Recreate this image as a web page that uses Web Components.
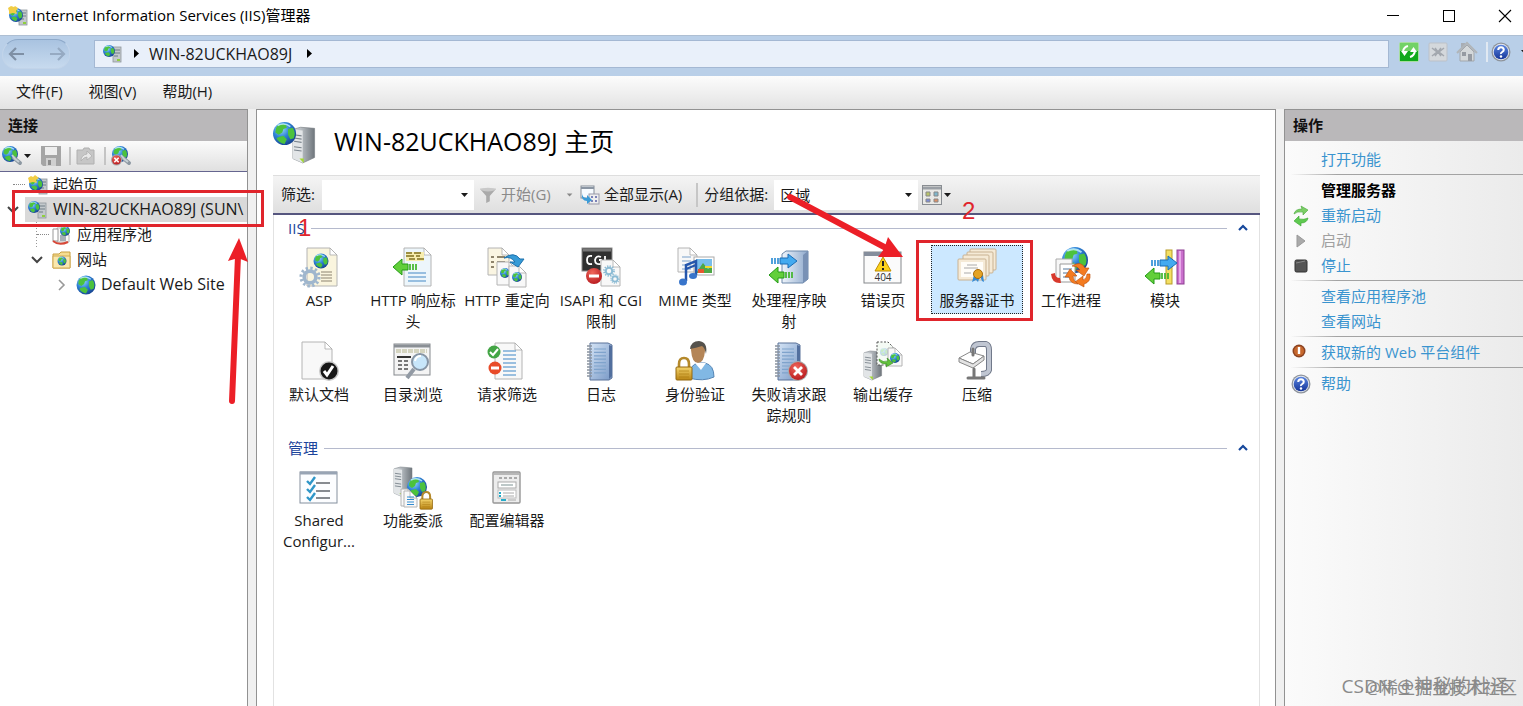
<!DOCTYPE html>
<html lang="zh-CN">
<head>
<meta charset="utf-8">
<title>Internet Information Services (IIS)管理器</title>
<style>
html, body { margin: 0; height: 100%; }
body { font: 15px/21px "Open Sans", "Noto Sans CJK SC", sans-serif; color: #1a1a1a; overflow: hidden; }
</style>
</head>
<body>
<iis-manager></iis-manager>
<script>
/* ---------- shared drawing parts ---------- */
const DEFS = `<defs>
<radialGradient id="gl" cx=".35" cy=".3" r=".8"><stop offset="0" stop-color="#9bdcff"/><stop offset=".45" stop-color="#2f83d6"/><stop offset="1" stop-color="#123a86"/></radialGradient>
<linearGradient id="sv" x1="0" x2="1"><stop offset="0" stop-color="#dfe3e6"/><stop offset=".5" stop-color="#aab0b5"/><stop offset="1" stop-color="#6f767c"/></linearGradient>
<linearGradient id="bk" x1="0" x2="1" y2="1"><stop offset="0" stop-color="#d3e3f5"/><stop offset="1" stop-color="#7898c6"/></linearGradient>
<linearGradient id="cube" x1="0" x2="1"><stop offset="0" stop-color="#eef4fb"/><stop offset="1" stop-color="#8ea9cc"/></linearGradient>
<linearGradient id="gold" x1="0" x2="0" y2="1"><stop offset="0" stop-color="#f4d46c"/><stop offset="1" stop-color="#b98413"/></linearGradient>
<radialGradient id="red" cx=".4" cy=".3" r=".8"><stop offset="0" stop-color="#f0665a"/><stop offset="1" stop-color="#b3141a"/></radialGradient>
<linearGradient id="hp" x1="0" x2="0" y2="1"><stop offset="0" stop-color="#5b86e0"/><stop offset="1" stop-color="#16369a"/></linearGradient>
</defs>`;
const globe = (x, y, r) => `<g transform="translate(${x} ${y}) scale(${r / 10})"><circle r="10" fill="url(#gl)"/><path d="M-6-7Q-2-9 1-8L2-5-1-4-2-1-5 1-8-1Q-8-5-6-7ZM-5 3-1 2 2 5 0 9Q-5 8-7 4ZM3-4 7-5Q10-1 8 4L5 5 3 1Z" fill="#4cc23d"/><path d="M-6-7Q0-10 5-6" fill="none" stroke="#c8f2ff" stroke-width="1.4" opacity=".8"/></g>`;
const page = (x, y, w, h, c = '#f8f8f8') => `<path d="M${x} ${y}h${w - 7}l7 7v${h - 7}h${-w}z" fill="${c}" stroke="#b4b4b4"/><path d="M${x + w - 7} ${y}v7h7z" fill="#fff" stroke="#aaa" stroke-width=".8"/>`;
const server = (x, y, s) => `<g transform="translate(${x} ${y}) scale(${s})"><path d="M0 2 7 0 20 1V28L9 33 0 29Z" fill="url(#sv)" stroke="#787e84" stroke-width=".6"/><path d="M0 2 9 3V33L0 29Z" fill="#e2e5e7"/><path d="M1 7l7 1M1 10l7 1M1 13l7 1M1 18l7 1M1 21l7 1" stroke="#7b848c"/><path d="M6 29h4v4z" fill="#a3da31"/></g>`;
const tower = (x, y) => `<rect x="${x}" y="${y}" width="8" height="15" fill="#c3c9cc" stroke="#8f979c" stroke-width=".8"/><path d="M${x + 1} ${y + 3}h6M${x + 1} ${y + 6}h6M${x + 1} ${y + 9}h4" stroke="#6f7c85"/><path d="M${x + 4} ${y + 12}h3v2h-3z" fill="#8fd03c"/>`;
const lines = (x, y, w, n, g, c = '#888') => `<path d="${Array.from({length: n}, (_, i) => `M${x} ${y + i * g}h${w}`).join('')}" stroke="${c}" stroke-width="1.2" fill="none"/>`;
const book = `<path d="M9 2h18l4 2v33l-3 2H9z" fill="url(#bk)" stroke="#5a7299"/><path d="M28 4v34l3-3V5z" fill="#526f9e"/>${lines(13, 8, 12, 8, 3.4, '#7fa3cc')}<path d="M6 5h5M6 8h5M6 11h5M6 14h5M6 17h5M6 20h5M6 23h5M6 26h5M6 29h5M6 32h5M6 35h5" stroke="#8a94a0" stroke-width="1.3"/>`;
const greenLeft = (x, y, s = 1) => `<g transform="translate(${x} ${y}) scale(${s})"><path d="M0 8 9 0V5H15V11H9V16Z" fill="#62cf3a" stroke="#249a17"/><path d="M17 5v6M20 5v6M23 5v6" stroke="#3fb52a" stroke-width="1.7"/></g>`;
const blueRight = (x, y) => `<path d="M${x + 9} ${y + 4}h8V${y}l9 7-9 7v-4h-8z" fill="#43aaf0" stroke="#1a6db5"/><path d="M${x + 1} ${y + 4}v6M${x + 4} ${y + 4}v6M${x + 7} ${y + 4}v6" stroke="#2589d4" stroke-width="1.6"/>`;
const lock = (x, y, s = 1) => `<g transform="translate(${x} ${y}) scale(${s})"><path d="M3 10V6Q3 0 8 0T13 6V10" fill="none" stroke="#b5892a" stroke-width="2.6"/><rect y="9" width="16" height="13" rx="1" fill="url(#gold)" stroke="#94680f"/><path d="M3 13h10M3 16h10M3 19h10" stroke="#a8780f" opacity=".6"/></g>`;
const gear = (x, y, r, c) => `<g transform="translate(${x} ${y})" fill="none" stroke="${c}"><circle r="${r}" stroke-width="${r * .35}" stroke-dasharray="${r * .262}"/><circle r="${r * .65}" stroke-width="${r * .4}"/></g>`;
const help = `<circle cx="10" cy="10" r="9.5" fill="#8e949c"/><circle cx="10" cy="10" r="8.2" fill="#e5e9f0"/><circle cx="10" cy="10" r="7.3" fill="url(#hp)"/><path d="M7.2 8Q7.4 5.2 10 5.2T12.8 7.8Q12.8 9 11.2 10T10 12" fill="none" stroke="#fff" stroke-width="2"/><circle cx="10" cy="14.5" r="1.2" fill="#fff"/>`;
const redX = (x, y, r) => `<circle cx="${x}" cy="${y}" r="${r}" fill="#a9a9a9"/><circle cx="${x}" cy="${y}" r="${r - 1}" fill="url(#red)"/><path d="M${x - r * .4} ${y - r * .4}l${r * .8} ${r * .8}m0 ${-r * .8}l${-r * .8} ${r * .8}" stroke="#fff" stroke-width="${r * .28}"/>`;
const magnifier = `<path d="M12 12l6 5" stroke="#8d98a2" stroke-width="4" stroke-linecap="round"/><path d="M10 9l4 5M12 12l5 4" stroke="#c6d0d6" stroke-width="2"/>`;

/* name: [viewBox size, markup] */
const ICONS = {
  app: [20, tower(11, 4) + globe(8, 9, 7) + '<path d="M0 2l3-2 3 1 1-1 3 2-2 3 1 3-4-1-4 1V5z" fill="#f1cd45"/>'],
  node: [20, tower(10, 3) + globe(6, 7, 6)],
  start: [20, tower(11, 4) + globe(8, 9, 7) + '<path d="M0 3l3-2 2 1 2-2 4 3-3 2 1 3-4-1-4 1V6z" fill="#f1cd45"/>'],
  connect: [20, globe(8, 8, 8) + magnifier],
  save: [20, '<path d="M0 0h20v20H2l-2-2z" fill="#a5a5a5"/><rect x="4" y="1" width="12" height="8" fill="#eee"/><rect x="5" y="12" width="10" height="8" fill="#d0d0d0"/><rect x="7" y="14" width="3" height="5" fill="#8c8c8c"/>'],
  up: [20, '<path d="M1 4h6l1-2h5l1 2h4v14H1z" fill="#c6c6c6" stroke="#b0b0b0"/><path d="M5 15q0-6 6-7V5l5 5-5 4v-3q-3 0-6 4z" fill="#e8e8e8" stroke="#aaa" stroke-width=".7"/>'],
  disconnect: [20, globe(9, 8, 8) + magnifier + redX(5.5, 14, 5.5)],
  pool: [20, page(5, 3, 12, 14) + globe(13, 6, 5) + '<path d="M1 4h5v12H1z" fill="#fff" stroke="#999"/>' + lines(8, 11, 6, 3, 2, '#567') + '<path d="M1 16q6 5 15 1" fill="none" stroke="#d74838" stroke-width="2"/>'],
  folder: [20, '<path d="M1 4h6l2-2h9v16H1z" fill="#f5dd92" stroke="#c99f3e"/><path d="M1 6h17v12H1z" fill="#f9e7ad" stroke="#d0aa52"/>' + globe(10, 11, 4.5)],
  globe: [20, globe(10, 10, 9.5)],
  home: [40, server(19, 5, 1.03) + globe(11, 11, 11)],
  refresh: [20, '<rect width="20" height="20" rx="2" fill="#a7dda0"/><rect x="1" y="1" width="18" height="8" fill="#72d267"/><rect x="1" y="9" width="18" height="10" fill="#11a91c"/><path d="M4 9q1-4 5-5M16 9q-1 5-5 6" fill="none" stroke="#fff" stroke-width="2"/><path d="M2 9h7l-3.5 5zM11 10h7l-3.5-5z" fill="#fff"/>'],
  stopload: [20, '<rect x="1" y="1" width="18" height="18" rx="1" fill="#d4d8dc" stroke="#bcc1c8"/><path d="M4 6l5 4-5 4M16 6l-5 4 5 4M7 6l6 8m0-8l-6 8" fill="none" stroke="#a2a7ae" stroke-width="1.5"/>'],
  house: [20, '<path d="M4 1h4v6H4z" fill="#a8adb4"/><path d="M3 10v9h14v-9l-7-7z" fill="#d4d8da" stroke="#a2a7ab"/><path d="M0 11L10 1l10 10" fill="none" stroke="#b0b5b9" stroke-width="2"/><path d="M11 12h4v7h-4zM5 10h4v4H5z" fill="#969ba2"/>'],
  help: [20, help],
  funnel: [20, '<path d="M1 3h18l-7 8v6l-4 2v-8z" fill="#aaa"/><ellipse cx="10" cy="4" rx="8" ry="2" fill="#c9c9c9"/>'],
  showall: [20, '<rect x="1" y="1" width="13" height="12" fill="#f7fbff" stroke="#858d98"/><path d="M1 3h13" stroke="#8a95a3" stroke-width="2"/><rect x="9" y="9" width="10" height="10" fill="#eee" stroke="#99a"/><path d="M11 11h2v2h-2zM15 11h2v2h-2zM11 15h2v2h-2zM15 15h2v2h-2z" fill="#7c82b8"/><path d="M2 8q0 5 5 5v-3l5 5-5 4v-3q-6 0-5-8z" fill="#3b9bd7"/>'],
  view: [20, '<rect x=".5" y=".5" width="19" height="19" fill="#e9e9e6" stroke="#898d92"/><path d="M1 3h18" stroke="#9a9fa5" stroke-width="3"/><g stroke="#888"><path d="M4 7h4v4H4z" fill="#b8c46a"/><path d="M12 7h4v4h-4z" fill="#7fb7cc"/><path d="M4 14h4v3H4z" fill="#7c8cd8"/><path d="M12 14h4v3h-4z" fill="#dc8f66"/></g>'],
  asp: [40, page(8, 1, 30, 38, '#faf5de') + globe(22, 14, 7.5) + lines(22, 25, 11, 4, 3, '#8b8470') + gear(11, 30, 9, '#9fb6cd')],
  headers: [40, page(11, 1, 27, 38, '#edf6fb') + '<path d="M13 5h18v9H13z" fill="#f7edae"/><path d="M13 6h6m2 0h7M13 9h8m2 0h4M16 12h6m2 0h7" stroke="#80701f" stroke-width="1.4"/>' + lines(15, 26, 18, 3, 4, '#4587c5') + greenLeft(0, 12)],
  redirect: [40, page(1, 1, 21, 27, '#faf5e2') + '<path d="M4 10h3m3 0h8M4 15h3m3 0h8M4 20h3m3 0h5" stroke="#8e846c" stroke-width="2"/>' + page(10, 15, 19, 23) + globe(18, 26, 5) + page(22, 19, 17, 21) + globe(30, 30, 5) + '<path d="M17 11q10-7 16 1h4l-6 8-8-5h5q-4-6-11-4z" fill="#369bd7" stroke="#1d70ac"/>'],
  cgi: [40, '<rect x="1" y="1" width="30" height="23" fill="#303030" stroke="#8a8a8a"/><path d="M2 3h28" stroke="#777" stroke-width="3"/><path d="M11 9q-5-1-5 4t5 4M20 10q-5-2-6 3 0 5 6 4v-4h-2M24 9v8" fill="none" stroke="#fff" stroke-width="1.8"/>' + page(20, 13, 19, 26) + gear(28, 24, 5, '#8cbbd4') + gear(34, 32, 4, '#8cbbd4') + '<circle cx="13" cy="29" r="8" fill="url(#red)"/><path d="M8 29h10" stroke="#fff" stroke-width="3"/>'],
  mime: [40, page(3, 1, 19, 24) + lines(7, 10, 9, 4, 4, '#789fc9') + '<rect x="19" y="10" width="20" height="18" fill="#fff" stroke="#aaa"/><path d="M21 12h16v14H21z" fill="#79bdea"/><path d="M21 26l7-10 5 6 4-3v7z" fill="#4ea746"/><path d="M23 22h6v4h-6z" fill="#e6572e"/><path d="M30 19h7v2h-7z" fill="#f2d92e"/><path d="M11 34V18L21 14V28" fill="none" stroke="#2456ac" stroke-width="2.5"/><path d="M11 22l10-4" stroke="#2456ac" stroke-width="2"/><ellipse cx="8" cy="35" rx="4" ry="3.5" fill="#3875cb"/><ellipse cx="18" cy="29" rx="4" ry="3" fill="#3875cb"/>'],
  handler: [40, '<path d="M13 7l4-3h22v28l-5 4H13z" fill="url(#cube)" stroke="#6d88aa"/><path d="M34 8v28l5-4V4z" fill="#7891b5"/>' + blueRight(2, 7) + greenLeft(0, 20)],
  error: [40, '<rect x="1" y="5" width="37" height="31" fill="#fbfbfb" stroke="#85888c"/><path d="M1 7h37" stroke="#858e9c" stroke-width="4"/><path d="M20 10l8 14H12z" fill="#fbd21c" stroke="#c08c00" stroke-linejoin="round"/><path d="M20 14v5M20 21v2" stroke="#222" stroke-width="2"/><text x="20" y="34" font-size="10" text-anchor="middle" fill="#333" font-family="Open Sans">404</text>'],
  cert: [40, '<g fill="#f5ead6" stroke="#c9b292"><rect x="13" y="2" width="26" height="21" rx="1"/><rect x="10" y="5" width="26" height="21" rx="1"/><rect x="6" y="8" width="26" height="21" rx="1"/><rect x="1" y="12" width="28" height="21" rx="1"/></g><rect x="4" y="15" width="22" height="15" fill="#fffdf8"/><path d="M10 18h10M7 21h14M7 26h7" stroke="#aaa"/><path d="M17 28l-2 7 4-2 2 2 2-6 2 5 2 1-1-7z" fill="#368bd6"/><circle cx="21" cy="27" r="4.500" fill="#e5a425" stroke="#a86c0d"/>'],
  worker: [40, globe(24, 13, 13) + '<path d="M5 12h16v20H5z" fill="#f7f7f7" stroke="#aaa"/><path d="M9 17h15v18H9z" fill="#fff" stroke="#999"/>' + lines(12, 22, 9, 3, 4, '#579') + '<path d="M0 27q1 10 10 9l-1-5q-5 0-5-5z" fill="#d8392c"/><g fill="#f47b20" stroke="#b94e0c" stroke-width=".6"><path d="M21 19q9-6 13 2h4l-5 8-8-6h4q-2-4-8-4z"/><path d="M39 27q1 8-6 10v3l-9-5 8-6v4q4-1 4-6z"/><path d="M14 30l5-8 7 7h-4q0 5 5 8-8 0-9-7z"/></g>'],
  module: [40, '<rect x="21" y="3" width="6" height="34" fill="#f4df63" stroke="#b79c29"/><rect x="32" y="3" width="7" height="34" fill="#ca70cd" stroke="#8d3e91"/><path d="M35 4v32" stroke="#e7aae9" stroke-width="2"/>' + blueRight(6, 9) + greenLeft(0, 21)],
  document: [40, page(3, 1, 30, 37) + '<circle cx="30" cy="30" r="10" fill="#c8c8c8"/><circle cx="30" cy="30" r="8.5" fill="#161616"/><path d="M25 30l3 4 6-9" fill="none" stroke="#fff" stroke-width="3"/>'],
  browse: [40, '<rect x="1" y="3" width="36" height="31" fill="#f4f4f4" stroke="#85898e"/><path d="M1 5h36" stroke="#8a8f95" stroke-width="3"/><path d="M3 10h31" stroke="#d4d4c0" stroke-width="4" stroke-dasharray="5 1"/><path d="M4 16h14" stroke="#333" stroke-width="2"/><path d="M5 20h12M5 24h10M5 28h10" stroke="#777" stroke-width="2" stroke-dasharray="4 2"/><path d="M21 28L14 37" stroke="#929aa4" stroke-width="4"/><circle cx="27" cy="21" r="8" fill="#c8e6fa" stroke="#8795a5" stroke-width="2"/><path d="M22 20q1-5 6-5" fill="none" stroke="#fff" stroke-width="2"/>'],
  filter: [40, page(8, 2, 27, 36) + lines(16, 10, 13, 7, 4, '#3d86c6') + '<circle cx="7" cy="11" r="6.500" fill="#43a545"/><path d="M3 11l3 3 5-6" fill="none" stroke="#fff" stroke-width="2"/><circle cx="8" cy="27" r="6.500" fill="#e84b29"/><path d="M4 27h8" stroke="#fff" stroke-width="3"/>'],
  log: [40, book],
  auth: [40, '<path d="M14 37q0-14 10-15h6q9 2 9 14-11 5-25 1z" fill="#81b8e4" stroke="#5685b4"/><path d="M20 22l6 7 5-7z" fill="#fff"/><path d="M16 9q0-8 7-8 8 0 7 9-1 12-7 12t-7-13z" fill="#b48557"/><path d="M15 8q1-8 9-8 9 1 7 13-1-6-4-8-6 2-12 3z" fill="#55524c"/>' + lock(1, 17)],
  failed: [40, book + redX(29, 30, 10)],
  cache: [40, server(1, 10, .88) + '<path d="M14 1h11l5 5v18H14z" fill="#f4faf4" stroke="#555" stroke-dasharray="2 1.5"/>' + globe(21, 11, 4).replace('<g ', '<g opacity=".25" ') + page(25, 7, 14, 18) + globe(32, 17, 5) + '<path d="M16 18q4 4 9 2l-1-3 6 5-7 4 1-3q-8 0-8-5z" fill="#62c13b" stroke="#31861a" stroke-width=".6"/>'],
  compress: [40, '<g fill="none" stroke-linejoin="round"><path d="M16 13V8q1-5 6-5h7q3 1 3 6v20q-1 4-8 4" stroke="#71798a" stroke-width="6"/><path d="M16 13V8q1-5 6-5h7q3 1 3 6v20q-1 4-8 4" stroke="#c0c6d2" stroke-width="4"/></g><path d="M2 17l11-6 14 4-11 8z" fill="#fff" stroke="#888"/><path d="M2 17v4l14 6 11-8v-4l-11 8z" fill="#e3e3e3" stroke="#888"/><path d="M16 8v6M17 28v8M11 37h16" stroke="#777" stroke-width="3" stroke-linecap="round"/>'],
  shared: [40, '<rect x="1" y="5" width="37" height="31" fill="#fcfdff" stroke="#85909e"/><path d="M1 6h37" stroke="#98a4b4" stroke-width="3"/><path d="M8 14l3 3 5-7M8 22l3 3 5-7M8 30l3 3 5-7" fill="none" stroke="#2f96c8" stroke-width="2.4"/><path d="M17 16h14M17 24h14M17 31h14" stroke="#60666e" stroke-width="1.4"/>'],
  delegate: [40, server(1, 0, .9) + globe(24, 20, 10) + page(8, 22, 14, 17) + page(11, 24, 13, 16) + lines(14, 30, 7, 4, 2.5, '#318bd1') + lock(27, 25, .78)],
  config: [40, '<rect x="6" y="5" width="27" height="31" rx="1" fill="#ededed" stroke="#969696" stroke-width="1.4"/><path d="M7 7h25" stroke="#b8b8b8" stroke-width="2"/><path d="M12 11h3m2 0h3m2 0h3m2 0h3" stroke="#aaa" stroke-width="2"/><rect x="11" y="15" width="18" height="6" fill="#fff" stroke="#aaa"/><path d="M14 18h12" stroke="#9aa" stroke-width="1.3"/><rect x="11" y="23" width="18" height="8" fill="#fff" stroke="#bbb"/><path d="M12 26h2m-2 3h2M14 33h5" stroke="#25abc9" stroke-width="2"/><path d="M16 26h11M16 29h11M21 33h8" stroke="#aaa"/>'],
  restart: [20, '<path d="M3 8q1-5 8-5l-1-3 7 4-5 5V6Q6 5 3 8z" fill="#7cce66" stroke="#46a83a" stroke-width=".6"/><path d="M17 12q-1 5-7 5v3l-7-5 5-5v3q5 1 9-1z" fill="#5fca50" stroke="#35a22c" stroke-width=".6"/>'],
  play: [20, '<path d="M6 4v12l8-6z" fill="#aaa" stroke="#999"/>'],
  stop: [20, '<rect x="4" y="4" width="12" height="12" rx="1.5" fill="#555" stroke="#333"/><path d="M5 7q5-1 9-2" stroke="#888"/>'],
  webpi: [20, '<circle cx="8" cy="8" r="6.5" fill="#8b4322"/><circle cx="8" cy="8" r="5" fill="#c7682d"/><path d="M8 4v7" stroke="#fff" stroke-width="2.4"/>'],
  back: [20, '<path d="M9 4L3 10l6 6M3 10h14" fill="none" stroke="#7f90a5" stroke-width="2.2"/>'],
  forward: [20, '<path d="M11 4l6 6-6 6M17 10H3" fill="none" stroke="#96aac2" stroke-width="2.2"/>'],
  min: [20, '<path d="M4 9.5h12" stroke="#000"/>'],
  max: [20, '<rect x="4.5" y="4.5" width="11" height="11" fill="none" stroke="#000"/>'],
  close: [20, '<path d="M4 4l12 12M16 4L4 16" stroke="#000" stroke-width="1.1"/>'],
  caret: [10, '<path d="M1 3h7L4.500 7z" fill="currentColor"/>'],
  right: [10, '<path d="M3 0v9l5-4.500z" fill="#000"/>'],
  down: [12, '<path d="M1 3l5 5 5-5" fill="none" stroke="#444" stroke-width="2"/>'],
  closed: [12, '<path d="M4 1l5 5-5 5" fill="none" stroke="#999" stroke-width="1.6"/>'],
  collapse: [12, '<path d="M2 8l4-4 4 4" fill="none" stroke="#17489c" stroke-width="2.2"/>']
};

function define(name, html, init) {
  const template = document.createElement('template');
  template.innerHTML = html;
  customElements.define(name, class extends HTMLElement {
    constructor() {
      super();
      this.attachShadow({ mode: 'open' }).append(template.content.cloneNode(true));
    }
    connectedCallback() { if (init && !this.ready) { this.ready = true; init.call(this, this.shadowRoot); } }
  });
}

const BTN = 'button{all:unset;box-sizing:border-box;display:flex;align-items:center;gap:4px;cursor:default;white-space:nowrap}';

define('iis-icon', '<style>:host{display:block;flex:none}svg{display:block;overflow:visible}</style>', function (root) {
  const [box, markup] = ICONS[this.getAttribute('name')];
  const size = this.getAttribute('size') || box;
  root.innerHTML += `<svg width="${size}" height="${size}" viewBox="0 0 ${box} ${box}" aria-hidden="true">${DEFS}${markup}</svg>`;
});

define('iis-titlebar', `<style>
:host{display:flex;align-items:center;gap:4px;height:35px;padding:0 8px 4px;background:#fff;color:#000;box-sizing:border-box}
h1{font:inherit;margin:0 auto 0 0}
.controls{display:flex;gap:36px}${BTN}
</style><iis-icon name="app"></iis-icon><h1>Internet Information Services (IIS)管理器</h1>
<div class="controls"><button aria-label="最小化"><iis-icon name="min"></iis-icon></button><button aria-label="最大化"><iis-icon name="max"></iis-icon></button><button aria-label="关闭"><iis-icon name="close"></iis-icon></button></div>`);

define('iis-addressbar', `<style>
:host{display:flex;align-items:center;height:41px;padding:0 0 4px;background:#b9cfe8;border-top:1px solid #aebfd3;box-sizing:border-box}
.history{display:flex;gap:20px;align-items:center;box-sizing:border-box;width:68px;height:30px;margin:0 24px 0 2px;padding:0 4px;border-radius:16px 14px 14px 14px;background:linear-gradient(#a9c3e0,#c7daee);border:1px solid #c2d4e9;border-top-color:#8ea9c9}
.path{flex:1;display:flex;align-items:center;gap:8px;height:28px;box-sizing:border-box;padding:0 8px;background:#e9f0fa;border:1px solid #a4b8d3}
.path button{margin:0 4px 0 0;font-size:16px}
.tools{display:flex;align-items:center;gap:9px;margin-left:10px;height:26px;align-self:flex-start;padding-top:3px}
.tools i{width:2px;height:20px;background:#e1e9f2;margin-right:-6px}
.tools .last{margin-right:-7px}
${BTN}</style>
<div class="history"><button aria-label="后退"><iis-icon name="back"></iis-icon></button><button aria-label="前进"><iis-icon name="forward"></iis-icon></button></div>
<div class="path"><iis-icon name="node"></iis-icon><iis-icon name="right"></iis-icon><button>WIN-82UCKHAO89J</button><iis-icon name="right"></iis-icon></div>
<div class="tools"><button aria-label="刷新"><iis-icon name="refresh"></iis-icon></button><button aria-label="停止" disabled><iis-icon name="stopload"></iis-icon></button><button aria-label="主页"><iis-icon name="house"></iis-icon></button><i></i><button aria-label="帮助"><iis-icon name="help"></iis-icon></button><iis-icon class="last" name="caret"></iis-icon></div>`);

define('iis-menubar', `<style>
:host{display:flex;gap:26px;align-items:center;height:33px;padding:0 16px 2px;box-sizing:border-box;background:linear-gradient(#fcfcfc,#e3e3e3)}${BTN}
</style><button>文件(F)</button><button>视图(V)</button><button>帮助(H)</button>`);

define('iis-pane', `<style>
:host{display:flex;flex-direction:column;min-width:0;min-height:0;border-top:1px solid #929292;box-sizing:border-box}
h2{margin:0;padding:0 8px;height:31px;font-size:15px;line-height:31px;color:#111;background:#bab8ba;flex:none}
</style><h2><slot name="title"></slot></h2><slot></slot>`);

define('iis-tree-item', `<style>
:host{display:flex;height:25px;align-items:center;padding-left:calc(var(--level,0) * 24px + 1px);overflow:hidden}
.lead{width:24px;flex:none;height:25px;display:flex;align-items:center;justify-content:center}
.leaf,.branch{justify-content:flex-end}
.leaf::after,.branch::after{content:"";width:12px;border-top:1px dotted #888}
.branch{background:linear-gradient(#999 50%,transparent 0) 11px 0/1px 3px repeat-y}
.row{display:flex;flex:1;align-items:center;gap:5px;height:25px;padding-left:3px;white-space:nowrap}
:host([selected]) .row{background:#d9d9d9}
:host([latin]){font-size:16px}
</style><span class="lead"></span><span class="row"><iis-icon name="node"></iis-icon><slot></slot></span>`, function (root) {
  const lead = root.querySelector('.lead'), state = this.getAttribute('state');
  this.style.setProperty('--level', this.getAttribute('level') || 0);
  this.setAttribute('role', 'treeitem');
  if (state === 'open' || state === 'closed') lead.innerHTML = `<iis-icon name="${state === 'open' ? 'down' : 'closed'}"></iis-icon>`;
  else lead.classList.add(state);
  const icon = document.createElement('iis-icon');
  icon.setAttribute('name', this.getAttribute('icon'));
  root.querySelector('.row iis-icon').replaceWith(icon);
});

define('iis-connections', `<style>
:host{display:flex;min-width:0}iis-pane{flex:1;border-right:1px solid #929292;background:#fff}
.bar{display:flex;align-items:center;height:31px;box-sizing:border-box;padding:0 2px;gap:8px;background:linear-gradient(#fbfbfb,#e0e0e0);border-bottom:1px solid #65658f}
.bar i{width:2px;height:18px;background:#c4c4c4;margin-right:-3px}${BTN}
.bar button{gap:1px}
</style><iis-pane><span slot="title">连接</span>
<div class="bar"><button aria-label="连接到"><iis-icon name="connect"></iis-icon><iis-icon name="caret"></iis-icon></button><button aria-label="保存"><iis-icon name="save"></iis-icon></button><i></i><button aria-label="向上"><iis-icon name="up"></iis-icon></button><i></i><button aria-label="断开"><iis-icon name="disconnect"></iis-icon></button></div>
<div role="tree"><iis-tree-item state="leaf" icon="start">起始页</iis-tree-item>
<iis-tree-item state="open" icon="node" selected latin>WIN-82UCKHAO89J (SUN\\</iis-tree-item>
<iis-tree-item level="1" state="branch" icon="pool">应用程序池</iis-tree-item>
<iis-tree-item level="1" state="open" icon="folder">网站</iis-tree-item>
<iis-tree-item level="2" state="closed" icon="globe" latin>Default Web Site</iis-tree-item></div></iis-pane>`);

define('iis-feature', `<style>
:host{display:block;height:94px;padding:4px 1px 0;box-sizing:border-box}
button{all:unset;box-sizing:border-box;display:flex;flex-direction:column;align-items:center;gap:3px;width:92px;padding:1px 0 2px;border:1px solid transparent;text-align:center;cursor:default}
:host([selected]) button{background:#cce8ff;border:1px dotted #222}
span{margin:0 1px}
</style><button><iis-icon name="asp"></iis-icon><span><slot></slot></span></button>`, function (root) {
  const icon = document.createElement('iis-icon');
  icon.setAttribute('name', this.getAttribute('icon'));
  root.querySelector('iis-icon').replaceWith(icon);
});

define('iis-group', `<style>
:host{display:block;margin-bottom:6px}
header{display:flex;align-items:center;height:26px;padding:0 10px 0 14px;gap:6px}
h3{margin:0;font:inherit;color:#1c449b}hr{flex:1;border:0;height:1px;margin:0 4px 0 0;background:#b5bacd}
.grid{display:grid;grid-template-columns:repeat(auto-fill,94px);margin-left:-2px}${BTN}
</style><header><h3><slot name="title"></slot></h3><hr><button aria-label="折叠"><iis-icon name="collapse"></iis-icon></button></header><div class="grid"><slot></slot></div>`);

define('iis-home', `<style>
:host{display:flex;flex-direction:column;min-width:0;background:#fff;border:1px solid #929292;border-bottom:0;box-sizing:border-box;padding:0 15px 0 16px}
.head{display:flex;align-items:center;gap:19px;height:65px;flex:none}
h2{margin:0 0 4px;font:25px/32px "Open Sans","Noto Sans CJK SC",sans-serif;color:#000}
.bar{display:flex;align-items:center;height:40px;box-sizing:border-box;padding:0 8px;border-top:1px solid #dedede;border-bottom:2px solid #56567f;background:linear-gradient(#f4f4f4,#dfdfdf);flex:none;white-space:nowrap}
.combo{display:flex;align-items:center;background:#fff;height:30px;margin:0 5px 0 7px;box-sizing:border-box;padding-right:4px}
input,select{all:unset;box-sizing:border-box;flex:1;min-width:0;height:30px;line-height:30px;padding:0 6px}
.filter{width:152px}.area{width:144px;margin:0 4px 0 6px}
.off{color:#8a8a8a}.sep{width:2px;height:24px;background:#c6c6c6;margin:0 6px 0 14px}
.go{width:69px}.caret{margin:0 6px 0 18px;color:#888}${BTN}
.body{flex:1;border:1px solid #e2e2e2;border-width:0 1px;min-height:0}
.bar .view{gap:1px}
</style>
<div class="head"><iis-icon name="home" size="42"></iis-icon><h2>WIN-82UCKHAO89J 主页</h2></div>
<div class="bar"><label for="f">筛选:</label><div class="combo filter"><input id="f"><iis-icon name="caret"></iis-icon></div>
<button class="off go" disabled><iis-icon name="funnel" size="18"></iis-icon>开始(G)</button><iis-icon class="caret" name="caret" size="8"></iis-icon>
<button><iis-icon name="showall"></iis-icon>全部显示(A)</button><i class="sep"></i>
<label for="g">分组依据:</label><div class="combo area"><select id="g"><option>区域</option></select><iis-icon name="caret"></iis-icon></div>
<button class="view" aria-label="视图"><iis-icon name="view"></iis-icon><iis-icon name="caret"></iis-icon></button></div>
<div class="body">
<iis-group><span slot="title">IIS</span>
<iis-feature icon="asp">ASP</iis-feature><iis-feature icon="headers">HTTP 响应标头</iis-feature><iis-feature icon="redirect">HTTP 重定向</iis-feature><iis-feature icon="cgi">ISAPI 和 CGI 限制</iis-feature><iis-feature icon="mime">MIME 类型</iis-feature><iis-feature icon="handler">处理程序映射</iis-feature><iis-feature icon="error">错误页</iis-feature><iis-feature icon="cert" selected>服务器证书</iis-feature><iis-feature icon="worker">工作进程</iis-feature><iis-feature icon="module">模块</iis-feature>
<iis-feature icon="document">默认文档</iis-feature><iis-feature icon="browse">目录浏览</iis-feature><iis-feature icon="filter">请求筛选</iis-feature><iis-feature icon="log">日志</iis-feature><iis-feature icon="auth">身份验证</iis-feature><iis-feature icon="failed">失败请求跟踪规则</iis-feature><iis-feature icon="cache">输出缓存</iis-feature><iis-feature icon="compress">压缩</iis-feature></iis-group>
<iis-group><span slot="title">管理</span><iis-feature icon="shared">Shared Configur...</iis-feature><iis-feature icon="delegate">功能委派</iis-feature><iis-feature icon="config">配置编辑器</iis-feature></iis-group>
</div>`);

define('iis-action', `<style>
:host{display:flex;align-items:center;height:25px;gap:10px}
.mark{width:20px;height:20px;flex:none}
a{color:#3a94cf;text-decoration:none;white-space:nowrap}
:host([off]) a{color:#a0a0a0}
</style><span class="mark"></span><a href="#"><slot></slot></a>`, function (root) {
  const name = this.getAttribute('icon');
  if (name) root.querySelector('.mark').innerHTML = `<iis-icon name="${name}"></iis-icon>`;
  if (this.hasAttribute('off')) root.querySelector('a').setAttribute('aria-disabled', 'true');
});

define('iis-actions', `<style>
:host{display:flex;min-width:0}iis-pane{flex:1;border-left:1px solid #929292;background:linear-gradient(90deg,#fbfbfb,#ebebeb)}
section{margin-left:6px;padding:3px 0 2px;border-bottom:1px solid;border-image:linear-gradient(90deg,transparent,#a3a3a3 20%) 1}
section:first-of-type{padding-top:6px}section:last-of-type{border:0}
h3{margin:0;padding-left:30px;font-size:15px;line-height:25px;color:#000}
</style><iis-pane><span slot="title">操作</span>
<section><iis-action>打开功能</iis-action></section>
<section><h3>管理服务器</h3><iis-action icon="restart">重新启动</iis-action><iis-action icon="play" off>启动</iis-action><iis-action icon="stop">停止</iis-action></section>
<section><iis-action>查看应用程序池</iis-action><iis-action>查看网站</iis-action></section>
<section><iis-action icon="webpi">获取新的 Web 平台组件</iis-action></section>
<section><iis-action icon="help">帮助</iis-action></section></iis-pane>`);

/* red marks drawn over the window */
define('iis-annotations', `<style>
:host{position:absolute;inset:0;pointer-events:none}svg{display:block;width:100%;height:100%}
text{font:24px "Liberation Sans",sans-serif;fill:#e0252c}
</style><svg><g fill="none" stroke="#e0252c" stroke-width="3"><rect x="13.5" y="191.5" width="249" height="34"/><rect x="917.5" y="241.5" width="114" height="78"/></g>
<g stroke="#ec1f27" stroke-width="6" stroke-linecap="round"><path d="M232 401L238 256"/><path d="M790 197L888 249"/></g>
<path d="M239 238L248 262 238 258 228 261ZM903 257L878 257 884 249 888 237Z" fill="#ec1f27"/>
<text x="298" y="236">1</text><text x="962" y="219">2</text></svg>`);

define('iis-watermark', `<style>
:host{position:absolute;right:6px;bottom:6px;display:grid;justify-items:end;color:#8a8a8a;line-height:24px;white-space:nowrap;pointer-events:none}
span{grid-area:1/1}.a{font-size:19px;padding-right:8px}.b{font-size:17px;padding-top:2px}
</style><span class="a">CSDN @神秘的杜泽</span><span class="b">@稀土掘金技术社区</span>`);

define('iis-manager', `<style>
:host{display:flex;flex-direction:column;height:100vh;position:relative;overflow:hidden;background:#f0f0f0}
main{flex:1;display:grid;grid-template-columns:248px minmax(0,1fr) 239px;gap:8px;min-height:0}
</style><iis-titlebar></iis-titlebar><iis-addressbar></iis-addressbar><iis-menubar></iis-menubar>
<main><iis-connections></iis-connections><iis-home></iis-home><iis-actions></iis-actions></main>
<iis-annotations></iis-annotations><iis-watermark></iis-watermark>`);
</script>
</body>
</html>
